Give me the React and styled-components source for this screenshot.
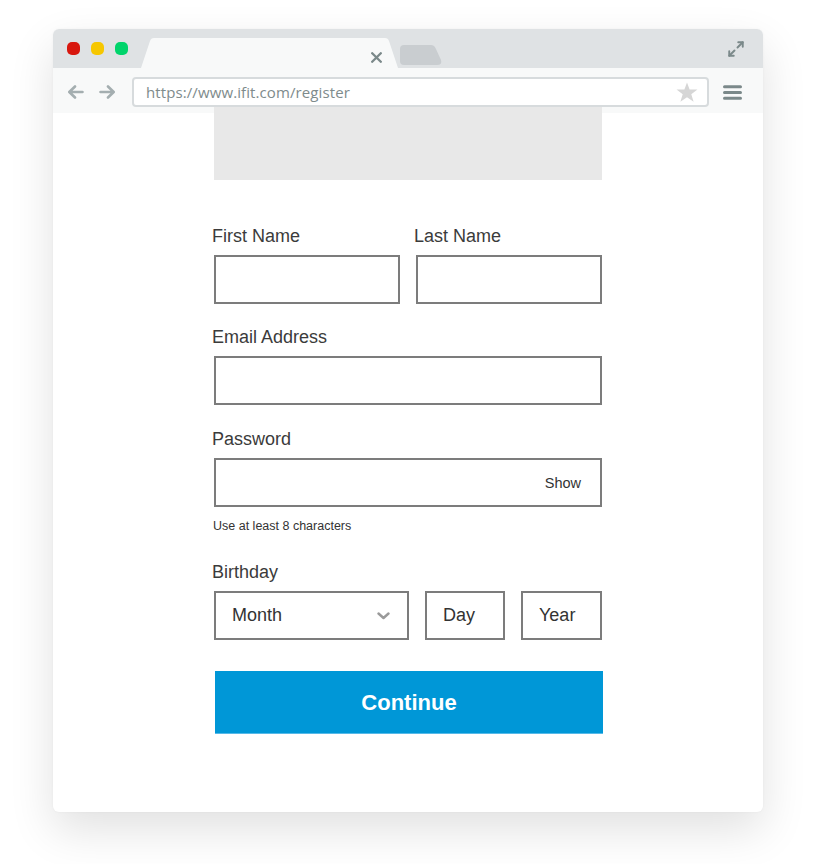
import React from 'react';
import styled, { createGlobalStyle } from 'styled-components';
import { Maximize2 } from 'lucide-react';

const GlobalStyle = createGlobalStyle`
  html, body {
    margin: 0;
    padding: 0;
    background: #ffffff;
  }
  body {
    font-family: 'Liberation Sans', Arial, sans-serif;
  }
  * {
    box-sizing: border-box;
  }
`;

const StPage = styled.div`
  width: 821px;
  height: 864px;
  padding: 29px 0 0 53px;
  overflow: hidden;
`;

const StWindow = styled.div`
  width: 710px;
  background: #ffffff;
  border-radius: 6px;
  box-shadow: 0 18px 45px rgba(0, 0, 0, 0.12), 0 0 3px rgba(0, 0, 0, 0.04);
  overflow: hidden;
`;

const StTitleBar = styled.div`
  display: flex;
  align-items: center;
  height: 39px;
  padding: 0 18px 0 14px;
  background: #dfe2e4;
`;

const StLights = styled.div`
  display: flex;
  gap: 11px;
  margin-right: 13px;
`;

const StLight = styled.span`
  width: 13px;
  height: 13px;
  border-radius: 5px;
  background: ${(props) => props.$color};
`;

const StTab = styled.div`
  align-self: flex-end;
  display: flex;
  align-items: center;
  justify-content: flex-end;
  width: 257px;
  height: 30px;
  padding: 8px 16px 0 0;
  background: #f8f9f9;
  clip-path: path('M0 30 L9 3 Q10 0 13 0 L244 0 Q247 0 248 3 L257 30 Z');
`;

const StGhostTab = styled.div`
  align-self: flex-end;
  width: 43px;
  height: 20px;
  margin: 0 0 3px 1px;
  background: #c9cdd0;
  clip-path: path('M5 0 L32 0 Q35 0 36.5 3 L42 15 Q43.5 20 38 20 L5 20 Q1 20 1 16 L1 4 Q1 0 5 0 Z');
`;

const StSpacer = styled.div`
  flex: 1;
`;

const StToolbar = styled.div`
  display: flex;
  align-items: center;
  height: 45px;
  padding: 6px 21px 3px 14px;
  background: #f8f9f9;
`;

const StNav = styled.div`
  display: flex;
  align-items: center;
  gap: 15px;
  margin-right: 16px;
`;

const StUrlBar = styled.div`
  flex: 1;
  display: flex;
  align-items: center;
  justify-content: space-between;
  height: 30px;
  padding: 0 9px 0 12px;
  background: #ffffff;
  border: 2px solid #d7dbdd;
  border-radius: 4px;
  margin-right: 14px;
`;

const StUrl = styled.span`
  font-family: 'Open Sans', sans-serif;
  font-size: 15px;
  color: #7e8b8c;
  letter-spacing: 0.1px;
`;

const StContent = styled.div`
  display: flex;
  flex-direction: column;
  align-items: center;
  padding-bottom: 78px;
`;

const StColumn = styled.div`
  width: 388px;
  display: flex;
  flex-direction: column;
`;

const StHero = styled.div`
  height: 73px;
  margin-top: -6px;
  background: #e8e8e8;
`;

const StForm = styled.form`
  display: flex;
  flex-direction: column;
  margin-top: 46px;
`;

const StRow = styled.div`
  display: grid;
  grid-template-columns: ${(props) => props.$cols || '1fr'};
  gap: 16px;
  margin-top: ${(props) => props.$top || 0}px;
`;

const StField = styled.div`
  display: flex;
  flex-direction: column;
  margin-top: ${(props) => props.$top || 0}px;
`;

const StLabel = styled.label`
  display: block;
  font-size: 18px;
  line-height: 20px;
  color: #3b3b3b;
  margin: 0 0 9px -2px;
`;

const StBox = styled.div`
  display: flex;
  align-items: center;
  justify-content: space-between;
  height: 49px;
  padding: 0 ${(props) => props.$padRight || 16}px 0 ${(props) => props.$padLeft || 16}px;
  border: 2px solid #7c7c7c;
  background: #ffffff;
  font-size: 18px;
  color: #333333;
`;

const StShow = styled.span`
  font-size: 14.5px;
  color: #333333;
`;

const StHelper = styled.p`
  margin: 11px 0 0 -1px;
  font-size: 12.5px;
  line-height: 16px;
  color: #333333;
`;

const StContinue = styled.button`
  height: 63px;
  margin: 31px -1px 0 1px;
  border: none;
  background: #0097d7;
  box-shadow: inset 0 -1px 0 #56b9e8;
  color: #ffffff;
  font-family: 'Liberation Sans', Arial, sans-serif;
  font-size: 22px;
  font-weight: 700;
  cursor: pointer;
`;

const CloseIcon = () => (
  <svg width="11" height="11" viewBox="0 0 11 11">
    <path d="M1.2 1.2 L9.8 9.8 M9.8 1.2 L1.2 9.8" stroke="#7b898a" strokeWidth="2.3" strokeLinecap="round" />
  </svg>
);

const ArrowIcon = ({ flip }) => (
  <svg width="17" height="14" viewBox="0 0 17 14" style={flip ? { transform: 'scaleX(-1)' } : undefined}>
    <path
      d="M15.5 7 H2.5 M8 1.5 L2.3 7 L8 12.5"
      fill="none"
      stroke="#a4aeb0"
      strokeWidth="2.6"
      strokeLinecap="round"
      strokeLinejoin="round"
    />
  </svg>
);

const StarIcon = () => (
  <svg width="22" height="20" viewBox="0 0 21 19">
    <polygon
      points="10.5,0.5 13,7 20.5,7.2 14.6,11.6 16.8,18.7 10.5,14.5 4.2,18.7 6.4,11.6 0.5,7.2 8,7"
      fill="#d6d6d6"
    />
  </svg>
);

const MenuIcon = () => (
  <svg width="19" height="15" viewBox="0 0 19 15">
    <path d="M1.5 1.8 H17.5 M1.5 7.5 H17.5 M1.5 13.2 H17.5" stroke="#7b898a" strokeWidth="3" strokeLinecap="round" />
  </svg>
);

const ChevronIcon = () => (
  <svg width="13" height="8" viewBox="0 0 13 8">
    <path d="M1.5 1.5 L6.5 6 L11.5 1.5" fill="none" stroke="#9a9a9a" strokeWidth="2.4" strokeLinecap="round" strokeLinejoin="round" />
  </svg>
);

const App = () => {
  const handleSubmit = (e) => {
    e.preventDefault();
  };

  return (
    <>
      <GlobalStyle />
      <StPage>
        <StWindow>
          <StTitleBar>
            <StLights>
              <StLight $color="#d8170e" />
              <StLight $color="#f6c700" />
              <StLight $color="#00d46b" />
            </StLights>
            <StTab>
              <CloseIcon />
            </StTab>
            <StGhostTab />
            <StSpacer />
            <Maximize2 size={18} color="#7b898a" strokeWidth={2.6} />
          </StTitleBar>

          <StToolbar>
            <StNav>
              <ArrowIcon />
              <ArrowIcon flip />
            </StNav>
            <StUrlBar>
              <StUrl>https://www.ifit.com/register</StUrl>
              <StarIcon />
            </StUrlBar>
            <MenuIcon />
          </StToolbar>

          <StContent>
            <StColumn>
              <StHero />
              <StForm onSubmit={handleSubmit}>
                <StRow $cols="1fr 1fr">
                  <StField>
                    <StLabel>First Name</StLabel>
                    <StBox />
                  </StField>
                  <StField>
                    <StLabel>Last Name</StLabel>
                    <StBox />
                  </StField>
                </StRow>

                <StField $top={23}>
                  <StLabel>Email Address</StLabel>
                  <StBox />
                </StField>

                <StField $top={24}>
                  <StLabel>Password</StLabel>
                  <StBox $padRight={19}>
                    <span />
                    <StShow>Show</StShow>
                  </StBox>
                  <StHelper>Use at least 8 characters</StHelper>
                </StField>

                <StField $top={28}>
                  <StLabel>Birthday</StLabel>
                  <StRow $cols="195px 80px 1fr">
                    <StBox $padRight={17}>
                      Month
                      <ChevronIcon />
                    </StBox>
                    <StBox>Day</StBox>
                    <StBox>Year</StBox>
                  </StRow>
                </StField>

                <StContinue type="submit">Continue</StContinue>
              </StForm>
            </StColumn>
          </StContent>
        </StWindow>
      </StPage>
    </>
  );
};

export default App;
